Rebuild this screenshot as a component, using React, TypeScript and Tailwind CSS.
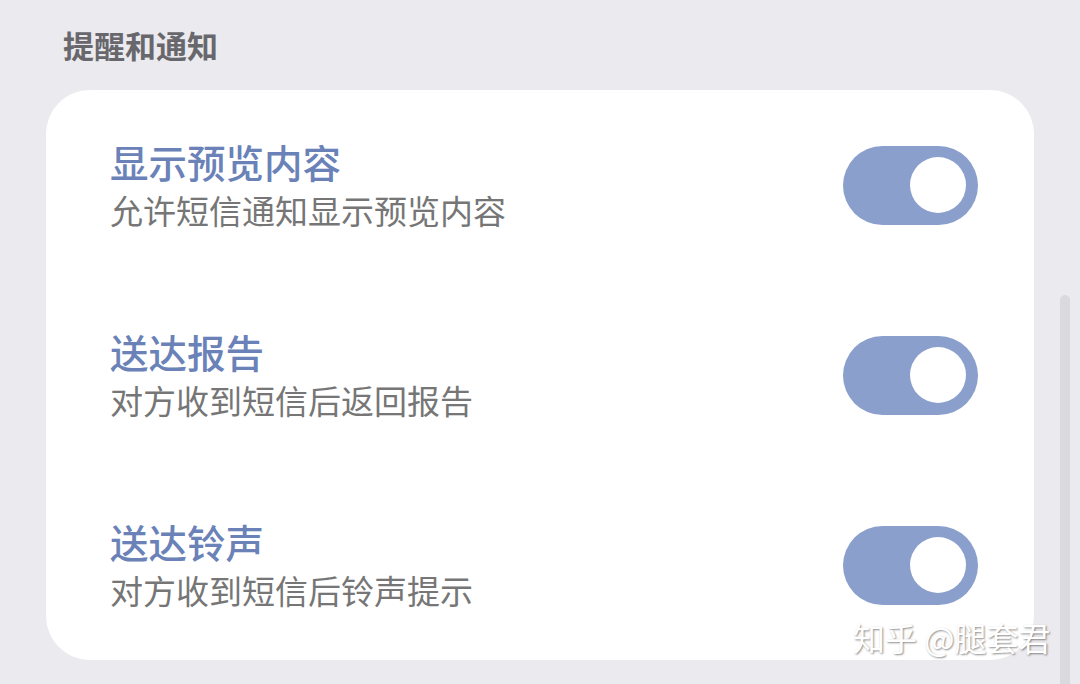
const cjk = { fontFamily: '"Noto Sans CJK SC", "Noto Sans", sans-serif' };

interface SettingRowProps {
  title: string;
  desc: string;
}

function Toggle() {
  return (
    <div className="w-[135px] h-[79px] rounded-full bg-[#8a9fcc] flex items-center justify-end pr-[12px] shrink-0">
      <div className="w-[56px] h-[56px] rounded-full bg-white" />
    </div>
  );
}

function SettingRow({ title, desc }: SettingRowProps) {
  return (
    <div className="h-[190px] flex items-center justify-between pl-[64px] pr-[56px]">
      <div className="pt-[2px]">
        <div className="text-[38.5px] leading-[46px] font-medium text-[#6a82b8]">{title}</div>
        <div className="mt-[3px] text-[33px] leading-[47px] text-[#767676]">{desc}</div>
      </div>
      <Toggle />
    </div>
  );
}

export default function App() {
  return (
    <div className="relative w-[1080px] h-[684px] overflow-hidden bg-[#eaeaef]" style={cjk}>
      <div className="pl-[63px] pt-[27px] h-[90px]">
        <div className="text-[31px] leading-[36px] font-bold text-[#68686c]">提醒和通知</div>
      </div>
      <div className="flex items-start">
        <div className="ml-[46px] w-[988px] bg-white rounded-[44px]">
          <SettingRow title="显示预览内容" desc="允许短信通知显示预览内容" />
          <SettingRow title="送达报告" desc="对方收到短信后返回报告" />
          <SettingRow title="送达铃声" desc="对方收到短信后铃声提示" />
        </div>
        <div className="ml-[26px] mt-[205px] w-[10px] h-[420px] rounded-full bg-[#d9d9de]" />
      </div>
      <div
        className="absolute left-[853px] top-[617px] text-[32px] leading-[40px] text-white"
        style={{ textShadow: '1px 1px 2px rgba(0,0,0,0.45)' }}
      >
        知乎 @腿套君
      </div>
    </div>
  );
}
